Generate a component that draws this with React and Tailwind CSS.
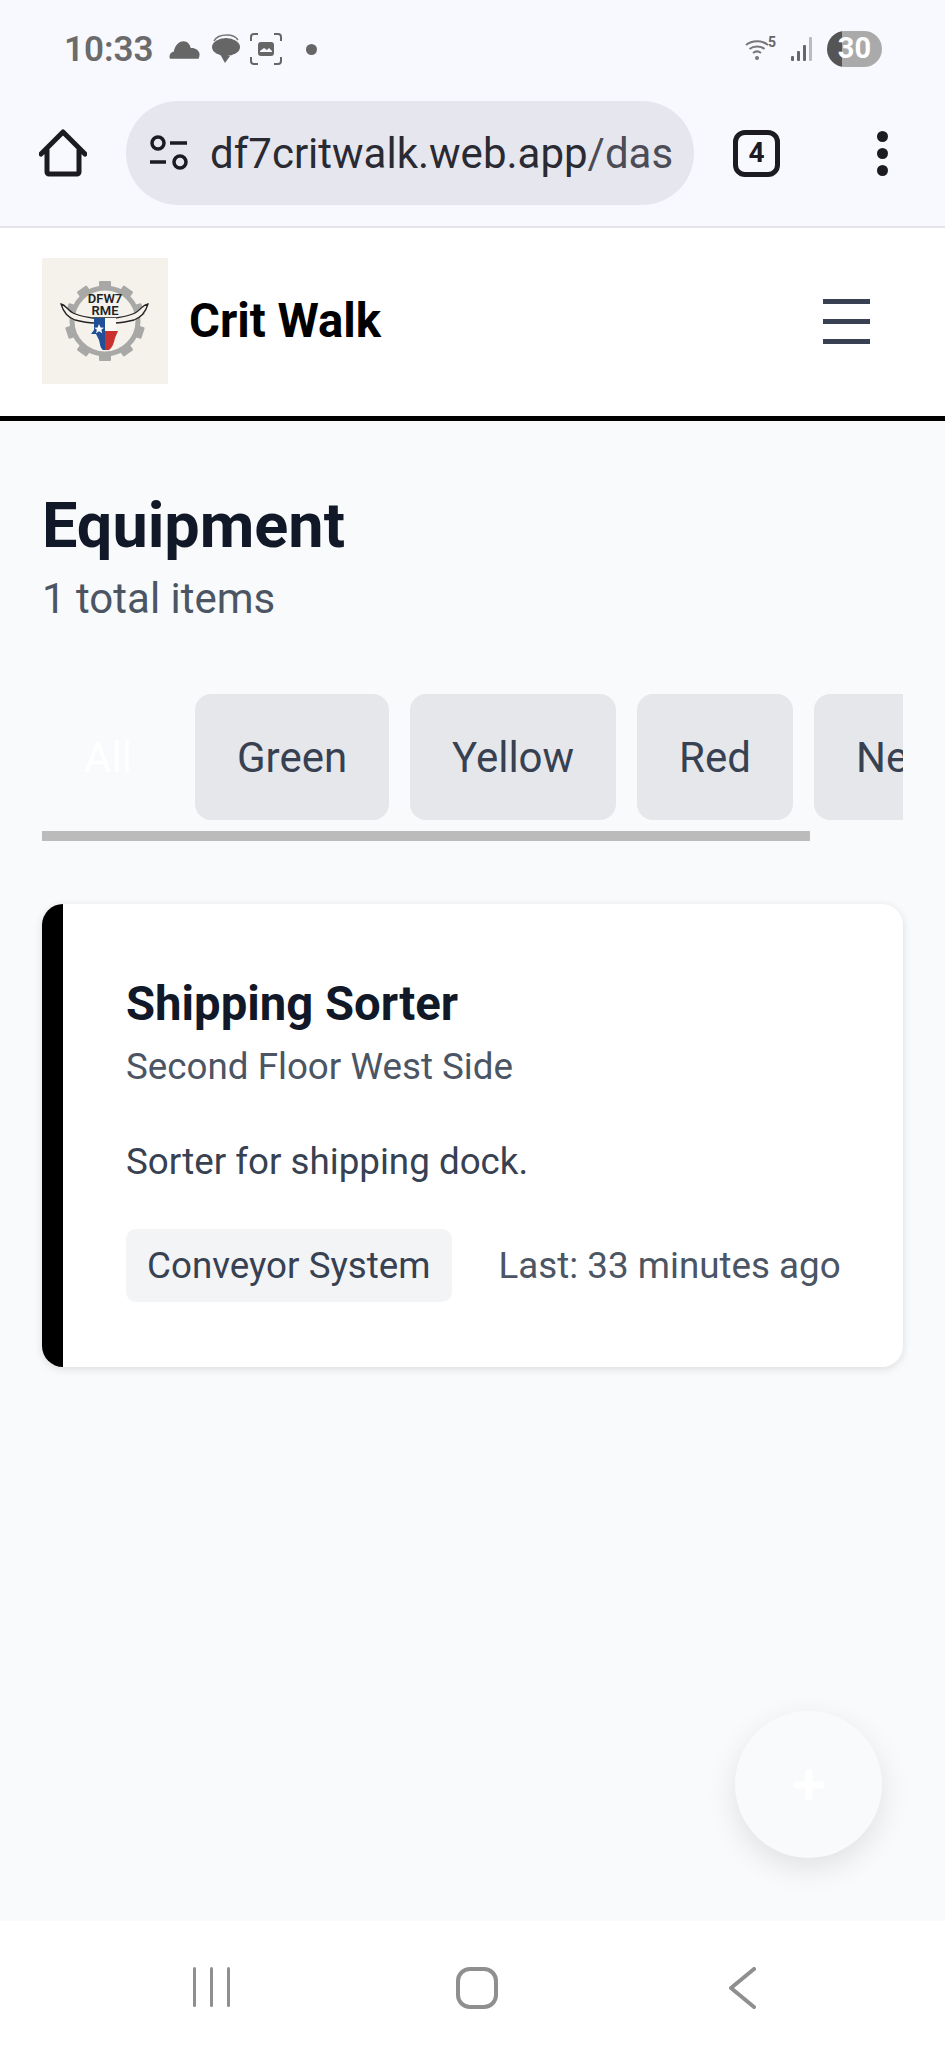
import { Plus } from 'lucide-react';

function StatusIcons() {
  return (
    <div className="flex items-center">
      <svg width="31" height="20" viewBox="0 0 32 20" className="ml-[15px]">
        <path d="M1 20c-1.500-3 .5-7 4-7.500C6 7 10 2 15 2c4 0 6.500 3 7.500 7 4-.5 8.500 2 9 6 .2 2-.5 4-1 5z" fill="#666" />
      </svg>
      <svg width="30" height="32" viewBox="0 0 30 32" className="ml-[11px]">
        <path d="M3 8c2-4 7-6 13-6 5 0 9 2 11 5" fill="none" stroke="#777" strokeWidth="1.500" />
        <ellipse cx="15" cy="14" rx="14" ry="9" fill="#666" />
        <path d="M9 21l10 2-5 7z" fill="#666" />
      </svg>
      <svg width="32" height="32" viewBox="0 0 32 32" fill="none" className="ml-[9px]">
        <path d="M1 8V4a3 3 0 0 1 3-3h4M24 1h4a3 3 0 0 1 3 3v4M31 24v4a3 3 0 0 1-3 3h-4M8 31H4a3 3 0 0 1-3-3v-4" stroke="#666" strokeWidth="2" />
        <rect x="8" y="9" width="16" height="14" rx="3" fill="#666" />
        <path d="M10 18l4-3 3 2 2-2 3 3v1H10z" fill="#f8f8ff" />
      </svg>
      <div className="ml-[24px] h-[11px] w-[11px] rounded-full bg-[#666]" />
    </div>
  );
}

function SystemIcons() {
  return (
    <div className="flex items-center">
      <div className="relative h-[30px] w-[32px]">
        <svg width="24" height="24" viewBox="0 0 24 24" fill="none" className="absolute top-[4px] left-0">
          <path d="M1 7c6-5 16-5 22 0M4.500 11c4-3.500 11-3.500 15 0M8 15c2.500-2 5.500-2 8 0" stroke="#777" strokeWidth="2" />
          <circle cx="12" cy="20" r="2" fill="#777" />
        </svg>
        <span className="absolute top-[-1px] left-[23px] text-[14px] leading-[18px] font-bold text-[#666]">5</span>
      </div>
      <svg width="24" height="26" viewBox="0 0 24 26" className="ml-[14px]">
        <rect x="0" y="20" width="3" height="5" rx="1" fill="#666" />
        <rect x="6" y="15" width="3" height="10" rx="1" fill="#666" />
        <rect x="12" y="9" width="3" height="16" rx="1" fill="#666" />
        <rect x="18" y="1" width="3" height="24" rx="1" fill="#bbb" />
      </svg>
      <div className="ml-[12px] flex h-[36px] w-[55px] items-center justify-center rounded-full bg-[linear-gradient(to_right,#555_0,#555_28%,#aaa_28%,#aaa_100%)] text-[29px] font-bold text-white">
        30
      </div>
    </div>
  );
}

function Logo() {
  const teeth = [0, 36, 72, 108, 144, 180, 216, 252, 288, 324];
  return (
    <svg width="126" height="126" viewBox="0 0 126 126" className="shrink-0 bg-[#f5f2ec]">
      {teeth.map((a) => (
        <rect key={a} x="57" y="23" width="12" height="7" rx="1" fill="#a8a8a6" transform={`rotate(${a} 63 63)`} />
      ))}
      <circle cx="63" cy="63" r="33" fill="none" stroke="#a8a8a6" strokeWidth="5" />
      <path d="M19 46c5 1 6 6 12 9 8 4 16 4 20 5h22c4-1 12-1 20-5 6-3 7-8 13-9-2 7-6 13-14 16-8 2-14 3-19 3H52c-5 0-11-1-19-3-8-3-12-9-14-16z" fill="#f5f2ec" stroke="#222" strokeWidth="1.300" />
      <path d="M52 60h11v32h-2c-3-2-3-7-4-10l-3-6h-5l3-4z" fill="#1f4f96" />
      <path d="M63 60h11v13H63z" fill="#f9f8f4" />
      <path d="M63 73h13l-3 7c-1 4-2 9-6 12h-4z" fill="#c8312e" />
      <path d="M57 66l1.500 3.500 3.500.3-2.700 2 .9 3.500-3.200-2-3 2 .9-3.500-2.700-2 3.500-.3z" fill="#fff" />
      <text x="63" y="45" textAnchor="middle" fontSize="13" fontWeight="600" fill="#222">DFW7</text>
      <text x="63" y="56.500" textAnchor="middle" fontSize="13" fontWeight="600" fill="#222">RME</text>
    </svg>
  );
}

export default function App() {
  const tabs = [
    { label: 'Green', w: 'w-[194px]' },
    { label: 'Yellow', w: 'w-[206px]' },
    { label: 'Red', w: 'w-[156px]' },
    { label: 'New', w: 'w-[140px]' },
  ];

  return (
    <div className="relative flex h-[2048px] w-[945px] flex-col overflow-hidden bg-[#f9fafb] font-['Roboto',sans-serif]">
      {/* phone status bar + browser toolbar */}
      <div className="h-[228px] shrink-0 border-b-2 border-[#e4e4ea] bg-[#f8f8ff]">
        <div className="flex h-[101px] items-start justify-between pt-[31px] pr-[63px] pl-[64px]">
          <div className="flex h-[36px] items-center">
            <span className="text-[35px] leading-none font-semibold text-[#6b6b6b]">10:33</span>
            <StatusIcons />
          </div>
          <SystemIcons />
        </div>
        <div className="flex items-center">
          <svg width="48" height="48" viewBox="0 0 48 48" fill="none" className="ml-[39px]">
            <path d="M2 25L24 3l22 22M8 21v22a2 2 0 0 0 2 2h28a2 2 0 0 0 2-2V21" stroke="#1c1b22" strokeWidth="5" strokeLinejoin="round" strokeLinecap="round" />
          </svg>
          <div className="ml-[39px] flex h-[104px] w-[568px] items-center overflow-hidden rounded-full bg-[#e6e6ee] pl-[23px]">
            <svg width="40" height="36" viewBox="0 0 40 36" fill="none" className="shrink-0">
              <circle cx="9" cy="8" r="6" stroke="#1c1b22" strokeWidth="3.500" />
              <path d="M21 8h17M1 27h16" stroke="#1c1b22" strokeWidth="3.500" />
              <circle cx="31" cy="27" r="6" stroke="#1c1b22" strokeWidth="3.500" />
            </svg>
            <span className="mt-[2px] ml-[21px] text-[42px] leading-none whitespace-nowrap text-[#2a2a33]">
              df7critwalk.web.app<span className="text-[#4c4c57]">/das</span>
            </span>
          </div>
          <div className="ml-[39px] flex h-[47px] w-[47px] items-center justify-center rounded-[12px] border-[5px] border-[#1c1b22] text-[28px] font-bold text-[#1c1b22]">
            4
          </div>
          <div className="ml-[97px] flex flex-col gap-[6px]">
            <div className="h-[11px] w-[11px] rounded-full bg-[#1c1b22]" />
            <div className="h-[11px] w-[11px] rounded-full bg-[#1c1b22]" />
            <div className="h-[11px] w-[11px] rounded-full bg-[#1c1b22]" />
          </div>
        </div>
      </div>

      {/* app header */}
      <header className="flex h-[193px] shrink-0 items-center justify-between border-b-[5px] border-black bg-white pr-[75px] pb-[2px] pl-[42px]">
        <div className="flex items-center gap-[21px]">
          <Logo />
          <h1 className="text-[47.25px] font-bold text-black">Crit Walk</h1>
        </div>
        <div className="flex w-[47px] flex-col gap-[15px]">
          <div className="h-[5px] bg-[#374151]" />
          <div className="h-[5px] bg-[#374151]" />
          <div className="h-[5px] bg-[#374151]" />
        </div>
      </header>

      {/* page */}
      <main className="flex-1 px-[42px] pt-[67px]">
        <h2 className="text-[63px] leading-[76px] font-bold text-[#111827]">Equipment</h2>
        <p className="mt-[5px] text-[42px] leading-[60px] text-[#4b5563]">1 total items</p>

        <div className="mt-[65px] flex gap-[21px] overflow-hidden">
          <button className="h-[126px] w-[132px] shrink-0 rounded-[16px] bg-[#f9fafb] text-[42px] text-white">All</button>
          {tabs.map((t) => (
            <button key={t.label} className={`h-[126px] shrink-0 rounded-[16px] bg-[#e5e7eb] pl-[42px] text-left text-[42px] text-[#374151] ${t.w}`}>
              {t.label}
            </button>
          ))}
        </div>
        <div className="mt-[11px] h-[10px] w-[768px] bg-[#bbbbbb]" />

        <div className="mt-[63px] flex h-[463px] overflow-hidden rounded-[21px] bg-white shadow-[0_2px_8px_rgba(0,0,0,0.12)]">
          <div className="w-[21px] shrink-0 bg-black" />
          <div className="flex-1 pt-[70px] pl-[63px]">
            <h3 className="text-[47.25px] leading-[60px] font-bold text-[#111827]">Shipping Sorter</h3>
            <p className="mt-[5px] text-[36.75px] leading-[56px] text-[#4b5563]">Second Floor West Side</p>
            <p className="mt-[39px] text-[36.75px] leading-[56px] text-[#374151]">Sorter for shipping dock.</p>
            <div className="mt-[39px] flex items-center gap-[47px]">
              <span className="flex h-[73px] items-center rounded-[10px] bg-[#f3f4f6] px-[21px] text-[36.75px] text-[#374151]">Conveyor System</span>
              <span className="text-[36.75px] text-[#4b5563]">Last: 33 minutes ago</span>
            </div>
          </div>
        </div>
      </main>

      {/* add button */}
      <button className="absolute top-[1711px] left-[735px] flex h-[147px] w-[147px] items-center justify-center rounded-full bg-[#f9fafb] shadow-[0_10px_30px_rgba(0,0,0,0.1)]">
        <Plus size={42} strokeWidth={4} className="text-white" />
      </button>

      {/* android nav bar */}
      <nav className="flex h-[127px] shrink-0 items-start bg-white pt-[46px]">
        <div className="ml-[193px] flex gap-[14px]">
          <div className="h-[40px] w-[3px] rounded-full bg-[#8f8f8f]" />
          <div className="h-[40px] w-[3px] rounded-full bg-[#8f8f8f]" />
          <div className="h-[40px] w-[3px] rounded-full bg-[#8f8f8f]" />
        </div>
        <div className="ml-[226px] h-[42px] w-[42px] rounded-[14px] border-[4px] border-[#8f8f8f]" />
        <svg width="28" height="42" viewBox="0 0 28 42" fill="none" className="ml-[230px]">
          <path d="M26 2L3 21l23 19" stroke="#8f8f8f" strokeWidth="4" strokeLinecap="round" strokeLinejoin="round" />
        </svg>
      </nav>
    </div>
  );
}
